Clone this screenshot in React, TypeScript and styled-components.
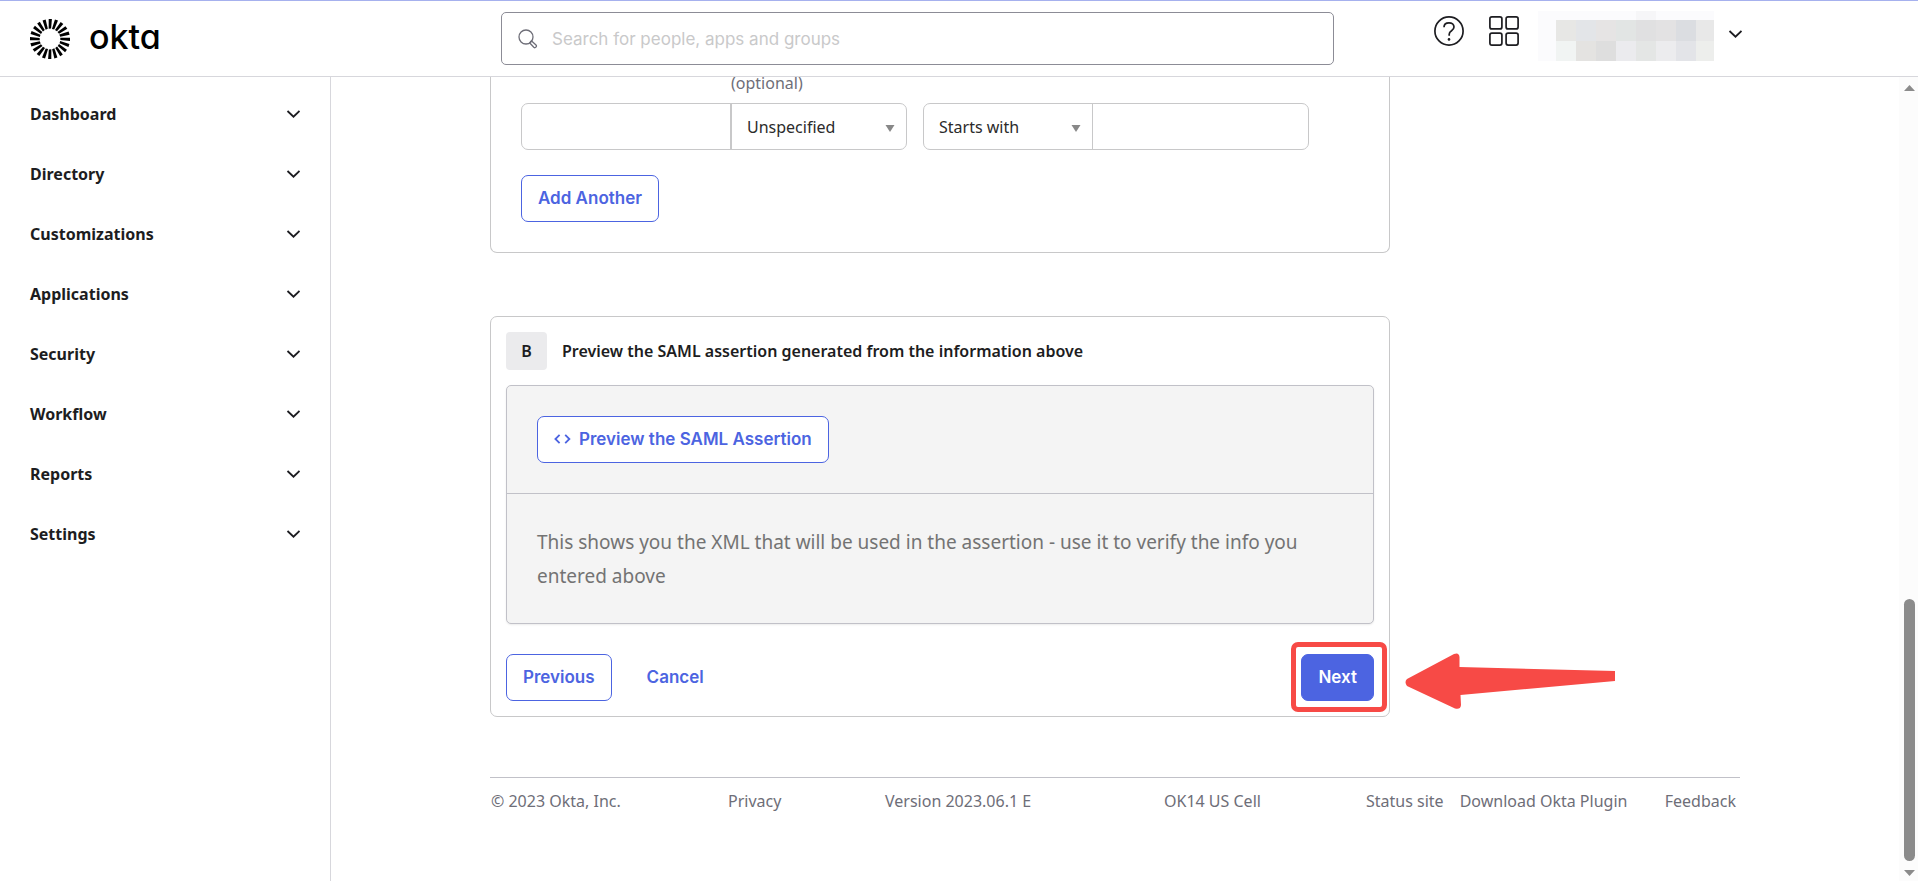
import React from 'react';
import styled, { createGlobalStyle, css } from 'styled-components';

const textFont = '"Noto Sans", "Open Sans", sans-serif';
const uiFont = 'Inter, Roboto, sans-serif';

const ink = '#1d1d21';
const muted = '#6e6e78';
const blue = '#4c64e1';
const line = '#c8c8c9';
const red = '#f74a46';

const GlobalStyle = createGlobalStyle`
  *, *::before, *::after { box-sizing: border-box; }
  body { margin: 0; background: #fff; color: ${ink}; font-family: ${textFont}; font-size: 16px; }
  button, input, select { font: inherit; color: inherit; }
  svg { display: block; flex: none; }
`;

const Page = styled.div`
  min-height: 100vh;
  display: flex;
  flex-direction: column;
`;

const Header = styled.header`
  display: flex;
  align-items: flex-start;
  height: 77px;
  border-top: 1px solid #a6b1ee;
  border-bottom: 1px solid #d7d7dc;
  background: #fff;
  z-index: 1;
`;

const Brand = styled.a`
  display: flex;
  align-items: center;
  gap: 18px;
  flex: 0 1 501px;
  padding: 17px 0 0 29px;
  color: #000;
  text-decoration: none;
`;

const BrandName = styled.span`
  padding-bottom: 4px;
  font-family: ${uiFont};
  font-feature-settings: 'cv11';
  font-size: 34px;
  font-weight: 500;
  line-height: 36px;
`;

const Search = styled.label`
  display: flex;
  align-items: center;
  gap: 12px;
  flex: 1 1 0;
  height: 53px;
  margin-top: 11px;
  padding: 0 16px;
  border: 1px solid #8c8c96;
  border-radius: 5px;
`;

const SearchInput = styled.input`
  flex: 1;
  min-width: 0;
  border: 0;
  outline: 0;
  background: transparent;
  font-family: ${uiFont};
  font-size: 17px;
  &::placeholder { color: #c9c9ca; opacity: 1; }
`;

const HeaderTools = styled.div`
  display: flex;
  align-items: flex-start;
  flex: 0 1 584px;
  padding: 10px 0 0 100px;
`;

const IconButton = styled.button`
  padding: 5px 0;
  margin-right: 25px;
  border: 0;
  background: none;
`;

const AccountButton = styled.button`
  display: flex;
  align-items: flex-start;
  gap: 14px;
  margin-left: -6px;
  padding: 0;
  border: 0;
  background: none;

  & > svg:last-child { margin-top: 19px; }
`;

const Body = styled.div`
  flex: 1;
  display: flex;
`;

const Sidebar = styled.nav`
  flex: 0 0 331px;
  padding: 7px 0;
  border-right: 1px solid #d7d7dc;
`;

const NavItem = styled.button`
  display: flex;
  align-items: center;
  justify-content: space-between;
  width: 100%;
  height: 60px;
  padding: 0 30px;
  border: 0;
  background: none;
  font-size: 16px;
  font-weight: 700;
`;

const Content = styled.main`
  flex: 1;
  min-width: 0;
  margin-top: -6px;
`;

const Column = styled.div`
  max-width: 1250px;
  margin: 0 auto;
`;

const Card = styled.section<{ $continued?: boolean }>`
  width: 72%;
  border: 1px solid ${line};
  border-radius: 7px;
  padding: 15px;
  ${(p) =>
    p.$continued &&
    css`
      border-top: 0;
      border-radius: 0 0 7px 7px;
      padding: 0 30px 30px;
      margin-bottom: 63px;
    `}
`;

const Optional = styled.p`
  margin: 0 0 8px 210px;
  color: ${muted};
  line-height: 24px;
`;

const FieldRow = styled.div`
  display: flex;
  gap: 16px;
  margin-bottom: 25px;
`;

const FieldGroup = styled.div`
  display: flex;
  height: 47px;
  border: 1px solid ${line};
  border-radius: 7px;
`;

const Field = styled.input<{ $width: number }>`
  width: ${(p) => p.$width}px;
  padding: 0 16px;
  border: 0;
  background: transparent;
`;

const SelectBox = styled.span<{ $width: number; $divider?: 'before' | 'after' }>`
  position: relative;
  width: ${(p) => p.$width}px;
  ${(p) => p.$divider === 'before' && `border-left: 2px solid ${line};`}
  ${(p) => p.$divider === 'after' && `border-right: 1px solid ${line};`}
`;

const Select = styled.select`
  width: 100%;
  height: 100%;
  padding: 0 30px 0 15px;
  border: 0;
  background: transparent;
  appearance: none;
  color: #2b2b2b;
`;

const SelectArrow = styled.svg`
  position: absolute;
  right: 11px;
  top: 21px;
  pointer-events: none;
`;

const Button = styled.button<{ $kind?: 'outline' | 'plain' | 'primary' }>`
  display: inline-flex;
  align-items: center;
  gap: 8px;
  height: 47px;
  padding: 0 16px 2px;
  border: 1px solid ${blue};
  border-radius: 7px;
  background: #fff;
  color: ${blue};
  font-family: ${uiFont};
  font-size: 17px;
  font-weight: 600;
  ${(p) => p.$kind === 'plain' && 'border-color: transparent; background: none;'}
  ${(p) => p.$kind === 'primary' && `background: ${blue}; color: #fff;`}
`;

const CardTitle = styled.h2`
  display: flex;
  align-items: center;
  gap: 15px;
  margin: 0 0 15px;
  font-size: 16px;
  font-weight: 600;
`;

const StepBadge = styled.span`
  display: grid;
  place-items: center;
  width: 41px;
  height: 38px;
  border-radius: 4px;
  background: #ebebed;
`;

const Panel = styled.div`
  border: 1px solid #c1c1c8;
  border-radius: 5px;
  background: #f4f4f4;
  box-shadow: 0 1px 2px rgba(0, 0, 0, 0.08);
  margin-bottom: 30px;
`;

const PanelAction = styled.div`
  padding: 30px;
  border-bottom: 1px solid #c1c1c8;
`;

const PanelNote = styled.p`
  margin: 0;
  padding: 31px 30px 30px;
  color: #737373;
  font-size: 19px;
  line-height: 34px;
`;

const Actions = styled.div`
  display: flex;
  align-items: center;
  gap: 18px;
`;

const NextSpot = styled.div`
  position: relative;
  margin-left: auto;
`;

const HighlightRing = styled.span`
  position: absolute;
  inset: -12px -13px -11px -10px;
  border: 5px solid ${red};
  border-radius: 7px;
  pointer-events: none;
`;

const Arrow = styled.svg`
  position: absolute;
  left: 104px;
  top: -1px;
  pointer-events: none;
`;

const Footer = styled.footer`
  display: flex;
  justify-content: space-between;
  margin-top: 60px;
  padding: 11px 4px 0 1px;
  border-top: 1px solid #c1c1c8;
  color: ${muted};
  line-height: 24px;
`;

const FooterPart = styled.div<{ $grow: number }>`
  display: flex;
  flex: ${(p) => p.$grow} 1 0;
  white-space: nowrap;
`;

const FooterLinks = styled.div`
  display: flex;
  justify-content: space-between;
  flex: 0 0 370px;
  white-space: nowrap;
`;

const FooterPair = styled.span`
  display: flex;
  gap: 16px;
`;

const FooterLink = styled.a`
  color: inherit;
  text-decoration: none;
`;

const ScrollTrack = styled.div`
  display: flex;
  flex-direction: column;
  align-items: center;
  flex: 0 0 19px;
  padding: 8px 0 5px 1px;
  background: #fcfcfc;
`;

const ScrollThumb = styled.div`
  width: 11px;
  height: 262px;
  margin: auto 0 9px;
  border-radius: 6px;
  background: #8b8b8b;
`;

const OktaMark = () => (
  <svg width="42" height="42" viewBox="-21 -21 42 42" aria-hidden="true">
    {Array.from({ length: 20 }, (_, i) => (
      <path
        key={i}
        d="M-1.1 10.4 L1.3 10.2 L1.3 20 L-1.900 20 Z"
        transform={`rotate(${i * 18})`}
      />
    ))}
  </svg>
);

const Chevron = () => (
  <svg width="14" height="8" viewBox="0 0 14 8" fill="none" stroke={ink} strokeWidth="1.8" aria-hidden="true">
    <path d="M1.500 1 L7.500 6.700 L13.500 1" />
  </svg>
);

const SearchIcon = () => (
  <svg width="20" height="20" viewBox="0 0 20 20" fill="none" stroke="#6e6e78" strokeWidth="1.3" aria-hidden="true">
    <circle cx="8" cy="8" r="7" />
    <path d="M12.6 12.6 L13.600 11.900 L18 16 A1.600 1.600 0 0 1 15.800 18.300 L11.800 14 L12.600 12.600 Z" strokeLinejoin="round" />
  </svg>
);

const HelpIcon = () => (
  <svg width="30" height="30" viewBox="0 0 30 30" fill="none" stroke={ink} strokeWidth="1.7" aria-hidden="true">
    <circle cx="15" cy="15" r="14.1" />
    <path d="M10 11.3 C10 8.4 12.2 6.8 15 6.8 C17.9 6.8 20 8.6 20 11.1 C20 15 15.2 14.6 15.2 18.2 V19.8" />
    <circle cx="15" cy="23.4" r="1.3" fill={ink} stroke="none" />
  </svg>
);

const AppsIcon = () => (
  <svg width="30" height="30" viewBox="0 0 30 30" fill="none" stroke={ink} strokeWidth="1.7" aria-hidden="true">
    <rect x="0.9" y="0.9" width="12" height="12" rx="2" />
    <rect x="17.1" y="0.9" width="12" height="12" rx="2" />
    <rect x="0.9" y="17.1" width="12" height="12" rx="2" />
    <rect x="17.1" y="17.1" width="12" height="12" rx="2" />
  </svg>
);

const CodeIcon = () => (
  <svg width="17" height="10" viewBox="0 0 17 10" fill="none" stroke={blue} strokeWidth="1.8" aria-hidden="true">
    <path d="M5.6 0.8 L1.4 5 L5.6 9.2 M11.2 0.8 L15.4 5 L11.2 9.2" />
  </svg>
);

const maskRows = [
  ['#e7e7e5', '#e3e5e8', '#e6e4e4', '#e2e5e4', '#e0e0e1', '#e3e2e3', '#dbdde1', '#e8e8e8'],
  ['#f1f4f3', '#e4e3e1', '#dedede', '#ebebee', '#e4e6e5', '#ececee', '#e3e4e8', '#edeeec'],
];

const MaskedAccount = () => (
  <svg width="176" height="50" viewBox="0 0 176 50" shapeRendering="crispEdges" role="img" aria-label="Account">
    <rect width="176" height="50" fill="#fbfbfd" />
    <rect x="98" width="20" height="9" fill="#f6f6f8" />
    {maskRows.map((row, r) =>
      row.map((fill, c) => (
        <rect key={`${r}-${c}`} x={18 + c * 20} y={r === 0 ? 9 : 30} width="21" height="21" fill={fill} />
      )),
    )}
  </svg>
);

const navItems = [
  'Dashboard',
  'Directory',
  'Customizations',
  'Applications',
  'Security',
  'Workflow',
  'Reports',
  'Settings',
];

const DownTriangle = () => (
  <SelectArrow width="10" height="7" viewBox="0 0 10 7" fill="#888" aria-hidden="true">
    <path d="M0.5 0 H9.5 L5 7 Z" />
  </SelectArrow>
);

export default function App() {
  return (
    <Page>
      <GlobalStyle />
      <Header>
        <Brand href="#">
          <OktaMark />
          <BrandName>okta</BrandName>
        </Brand>
        <Search>
          <SearchIcon />
          <SearchInput
            type="text"
            aria-label="Search for people, apps and groups"
            placeholder="Search for people, apps and groups"
          />
        </Search>
        <HeaderTools>
          <IconButton aria-label="Help"><HelpIcon /></IconButton>
          <IconButton aria-label="Apps"><AppsIcon /></IconButton>
          <AccountButton aria-label="Account menu">
            <MaskedAccount />
            <Chevron />
          </AccountButton>
        </HeaderTools>
      </Header>
      <Body>
        <Sidebar>
          {navItems.map((name) => (
            <NavItem key={name}>
              {name}
              <Chevron />
            </NavItem>
          ))}
        </Sidebar>
        <Content>
          <Column>
            <Card $continued>
              <Optional>(optional)</Optional>
              <FieldRow>
                <FieldGroup>
                  <Field $width={208} type="text" aria-label="Name" />
                  <SelectBox $width={176} $divider="before">
                    <Select aria-label="Name format">
                      <option>Unspecified</option>
                    </Select>
                    <DownTriangle />
                  </SelectBox>
                </FieldGroup>
                <FieldGroup>
                  <SelectBox $width={169} $divider="after">
                    <Select aria-label="Filter">
                      <option>Starts with</option>
                    </Select>
                    <DownTriangle />
                  </SelectBox>
                  <Field $width={215} type="text" aria-label="Filter value" />
                </FieldGroup>
              </FieldRow>
              <Button>Add Another</Button>
            </Card>
            <Card>
              <CardTitle>
                <StepBadge>B</StepBadge>
                Preview the SAML assertion generated from the information above
              </CardTitle>
              <Panel>
                <PanelAction>
                  <Button>
                    <CodeIcon />
                    Preview the SAML Assertion
                  </Button>
                </PanelAction>
                <PanelNote>
                  This shows you the XML that will be used in the assertion - use it to verify the info you entered above
                </PanelNote>
              </Panel>
              <Actions>
                <Button>Previous</Button>
                <Button $kind="plain">Cancel</Button>
                <NextSpot>
                  <Button $kind="primary">Next</Button>
                  <HighlightRing />
                  <Arrow width="211" height="57" viewBox="0 0 211 57" fill={red} aria-hidden="true">
                    <path d="M2 26 L49 1 Q54 -1 54.5 4 L54.5 14 L210 18 V28 L55.5 42 L56 52 Q55.500 57 50 55.500 L2 33 Q-1 29 2 26 Z" />
                  </Arrow>
                </NextSpot>
              </Actions>
            </Card>
            <Footer>
              <FooterPart $grow={237}>© 2023 Okta, Inc.</FooterPart>
              <FooterPart $grow={157}><FooterLink href="#">Privacy</FooterLink></FooterPart>
              <FooterPart $grow={279}>Version 2023.06.1 E</FooterPart>
              <FooterPart $grow={202}>OK14 US Cell</FooterPart>
              <FooterLinks>
                <FooterPair>
                  <FooterLink href="#">Status site</FooterLink>
                  <FooterLink href="#">Download Okta Plugin</FooterLink>
                </FooterPair>
                <FooterLink href="#">Feedback</FooterLink>
              </FooterLinks>
            </Footer>
          </Column>
        </Content>
        <ScrollTrack aria-hidden="true">
          <svg width="11" height="6" viewBox="0 0 11 6" fill="#8b8b8b"><path d="M0 6 L5.500 0 L11 6 Z" /></svg>
          <ScrollThumb />
          <svg width="11" height="6" viewBox="0 0 11 6" fill="#8b8b8b"><path d="M0 0 L5.500 6 L11 0 Z" /></svg>
        </ScrollTrack>
      </Body>
    </Page>
  );
}
